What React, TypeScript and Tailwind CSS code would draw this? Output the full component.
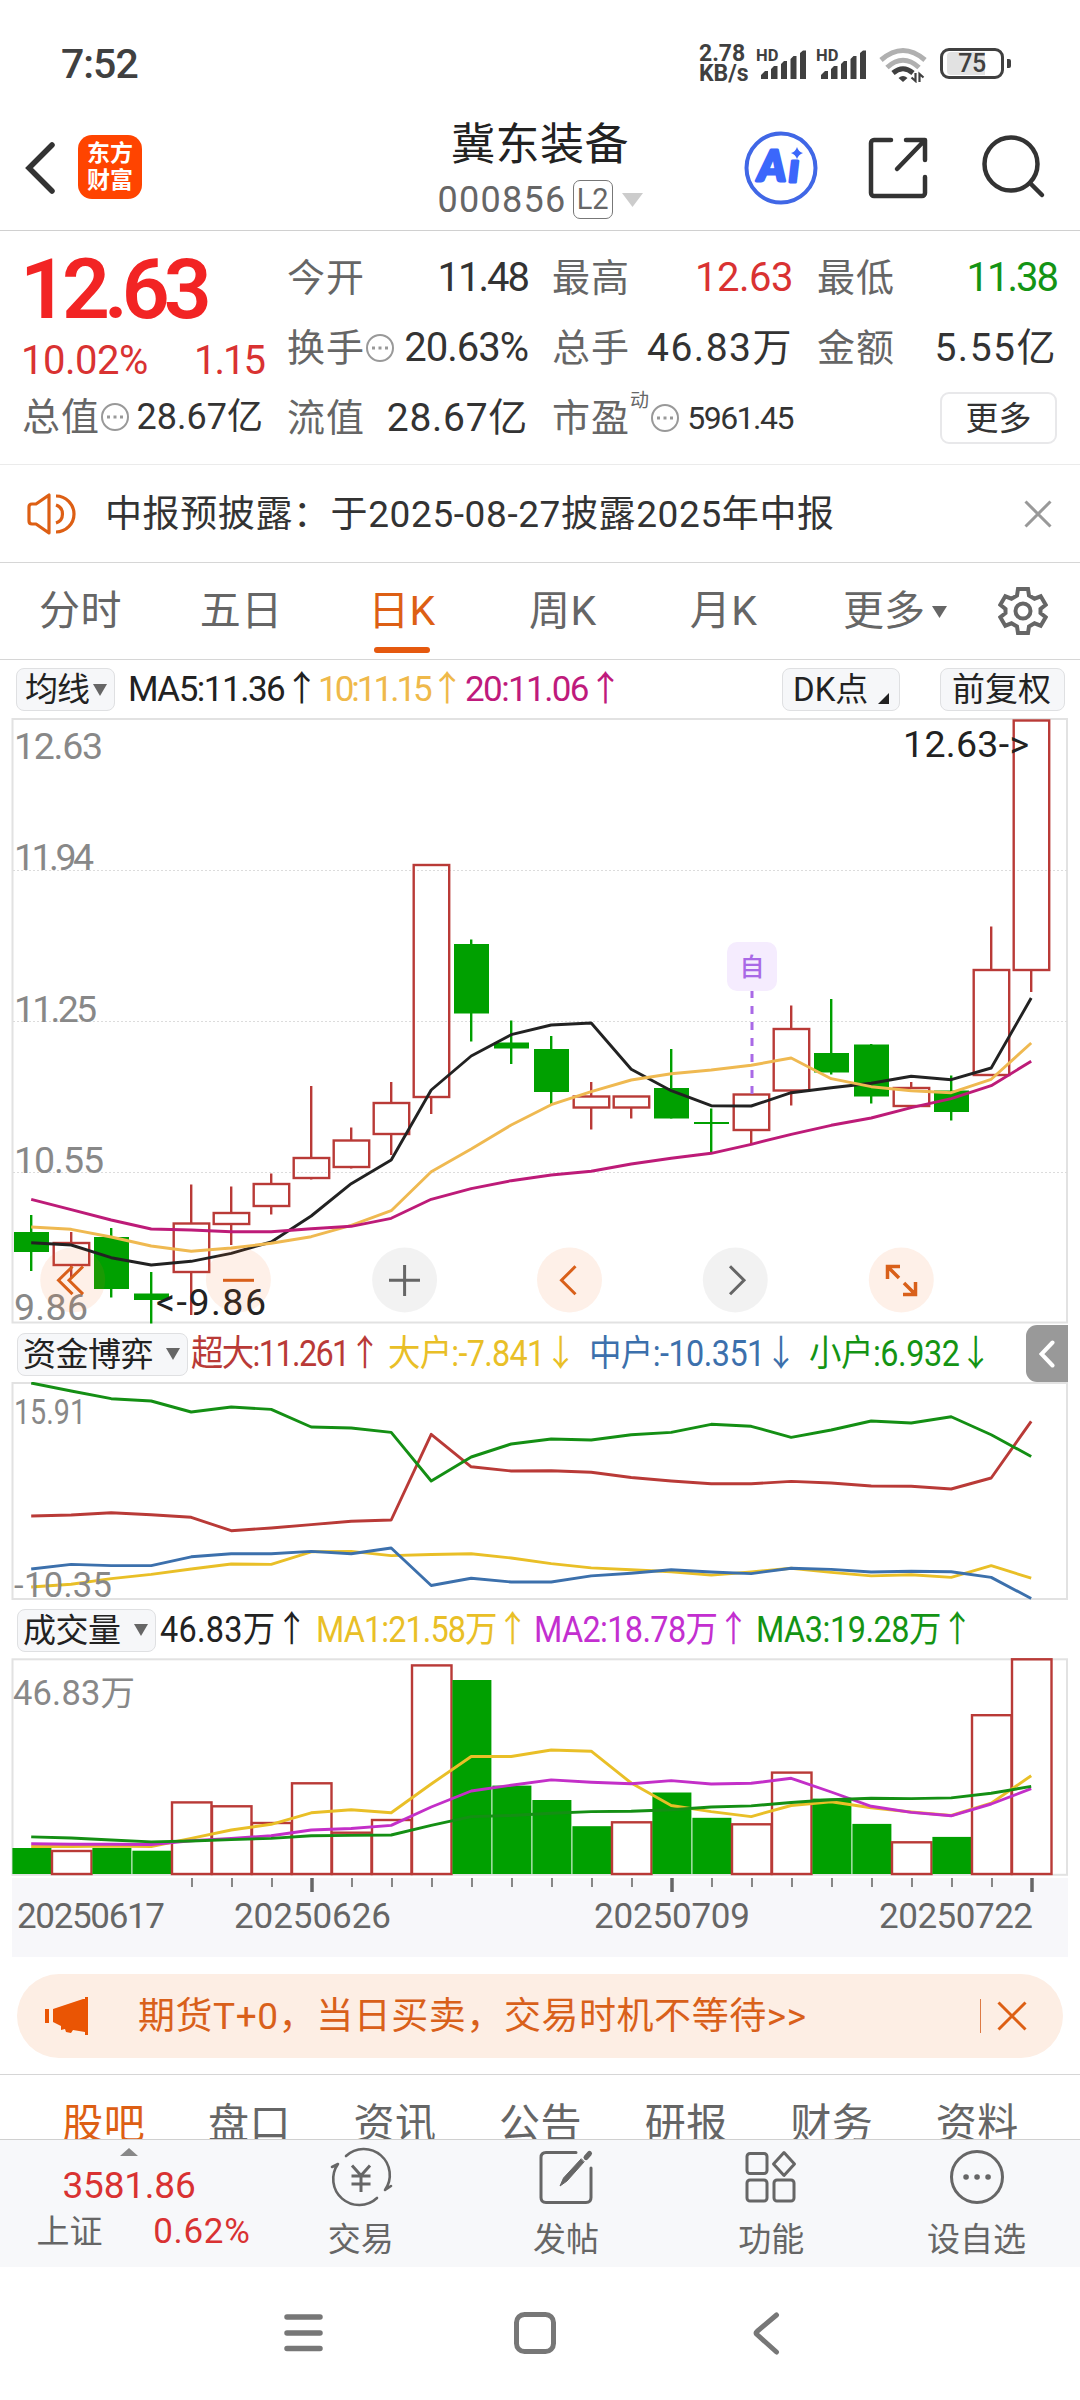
import type { ReactNode } from 'react'

const GREEN = '#00a000'
const RED = '#b93a37'
const GREEN_LINE = '#148f14'

// x of the nth trading day on every chart
const dayX = (i: number) => 31.2 + i * 40

interface Candle {
  up: boolean
  top: number
  bottom: number
  high: number
  low: number
}

const c = (up: boolean, top: number, bottom: number, high: number, low: number): Candle => ({ up, top, bottom, high, low })

const candles: Candle[] = [
  c(false, 1232, 1252, 1215, 1271),
  c(true, 1243, 1265, 1232, 1277),
  c(false, 1237, 1289, 1228, 1297.5),
  c(false, 1293.5, 1300, 1272, 1323.5),
  c(true, 1223.5, 1272, 1184.5, 1315),
  c(true, 1213, 1224, 1186.5, 1245),
  c(true, 1184, 1206, 1173.5, 1214.5),
  c(true, 1158, 1178, 1086, 1179.5),
  c(true, 1140.5, 1167, 1127.5, 1168.5),
  c(true, 1103, 1134, 1082, 1155),
  c(true, 865, 1097, 865, 1114),
  c(false, 944, 1013.5, 939.5, 1041.5),
  c(false, 1042.5, 1048.5, 1020.5, 1064),
  c(false, 1049, 1092, 1036, 1105),
  c(true, 1096.5, 1107.5, 1082, 1129.5),
  c(true, 1096.5, 1107.5, 1096.5, 1118.5),
  c(false, 1088, 1118.5, 1049, 1118.5),
  c(false, 1122, 1124, 1108.5, 1152.5),
  c(true, 1094.5, 1130, 1094.5, 1144.5),
  c(true, 1029, 1090.5, 1005.5, 1105.5),
  c(false, 1053, 1072.5, 999, 1074.5),
  c(false, 1044.5, 1096.5, 1044, 1103.5),
  c(true, 1088, 1106, 1082, 1106),
  c(false, 1090.5, 1112, 1075.5, 1120.5),
  c(true, 970, 1075, 926.5, 1075),
  c(true, 720.5, 970, 720.5, 992),
]

const ma5 = [1242.7, 1245, 1257.7, 1265, 1261.3, 1253.3, 1242, 1216, 1183.7, 1160, 1090, 1056, 1034.7, 1025, 1023, 1069.3, 1090.7, 1105.7, 1106, 1092.7, 1087.7, 1083.3, 1076.3, 1079.7, 1068, 998]
const ma10 = [1227, 1229.3, 1237, 1246, 1251.3, 1248, 1243.3, 1236.7, 1225.3, 1210.7, 1171.7, 1149, 1125, 1104.7, 1091.7, 1080, 1073.7, 1070, 1065.3, 1058, 1078.7, 1086.7, 1090.7, 1092.7, 1079.3, 1043]
const ma20 = [1199.3, 1209.7, 1220, 1229, 1230, 1231.7, 1231.7, 1228.7, 1226.3, 1218.3, 1199.3, 1188.7, 1180.7, 1175, 1171.3, 1164, 1158.3, 1153.3, 1144.3, 1134.3, 1125.3, 1118, 1107.7, 1098.7, 1085.7, 1061.3]

const fundSmall = [1, 9, 16.7, 19, 30, 25, 27.4, 45, 46, 50.4, 99, 75, 62, 57, 58, 52.7, 50.4, 42.3, 44.3, 55.4, 48, 39, 41, 34.7, 52.7, 74.5]
const fundHuge = [134, 133, 130.7, 132.7, 135.3, 148.7, 146, 142.6, 139.2, 138, 52.3, 84.8, 89, 88.7, 90.2, 95.5, 99, 101.7, 101.7, 99.4, 101, 104, 104.3, 107, 96, 39.3]
const fundBig = [205, 202.3, 196.6, 192.4, 187, 182, 182.4, 169.8, 169.4, 173.6, 172.5, 171.7, 176, 181.6, 185.9, 187.8, 189.7, 193.1, 190, 186.2, 190.4, 193.9, 192.7, 195.4, 183.6, 196.2]
const fundMid = [187, 182.4, 183.6, 183.6, 174.8, 171.7, 171.7, 169.4, 171.7, 166, 203.5, 196.2, 200, 200, 193.9, 191.2, 187.8, 190, 191.6, 186.2, 187.4, 190, 189.3, 189.7, 195.4, 216.5]

const volTop = [190, 193, 190, 192.7, 144.4, 148.3, 165, 125.3, 174.7, 162, 7.4, 22, 127.6, 142, 168.2, 164.3, 134.5, 159.8, 166.3, 114.6, 140.6, 165.9, 184.3, 178.9, 57.2, 1.3]
const volMa1 = [188.5, 188.5, 188, 188.5, 180.4, 172, 166.3, 154.8, 151.7, 154.8, 126, 98.5, 98.5, 92, 93.2, 125, 147.5, 153.6, 158.6, 147.5, 143.7, 149.8, 154, 157.5, 145.2, 117.7]
const volMa2 = [185.8, 186.2, 186.2, 186.5, 182.7, 180.4, 177.7, 172, 170.5, 167.4, 149, 133, 127.2, 121.9, 124.2, 125.7, 122.6, 126, 125.3, 120.3, 134, 148.3, 154.4, 157.8, 146, 130.7]
const volMa3 = [178.9, 180, 182, 183.9, 183, 181.6, 180.4, 177.7, 177.4, 177, 167.4, 158.6, 157.5, 155.2, 153.6, 153.3, 151.7, 149, 147.9, 144.5, 141.8, 140.2, 140.6, 139.9, 135.3, 128.4]

function Line({ data, color }: { data: number[]; color: string }) {
  return (
    <polyline
      points={data.map((y, i) => `${dayX(i)},${y}`).join(' ')}
      fill="none"
      stroke={color}
      strokeWidth="2.900"
      strokeLinejoin="round"
    />
  )
}

function Signal() {
  return (
    <div className="flex h-[34px] w-[50px] items-start">
      <span className="w-[5px] text-[16.5px] leading-none font-bold">HD</span>
      <svg className="mt-[2px] shrink-0" width="45" height="30" viewBox="0 0 45 30" fill="#404040">
        <path d="M0 29v-4l4-4h3v8zM10 29V19l3-3h3.500v13zM20 29V14l3-3h3v18zM29.500 29V9l3-3h3v23zM39 29V3l3-2.500h3V29z" />
      </svg>
    </div>
  )
}

function StatusBar() {
  return (
    <div className="flex h-[104px] shrink-0 items-start pt-[44px] pl-[61px] text-[#404040]">
      <div className="w-[638px] text-[41px] leading-[41px] font-medium tracking-[-1px]">7:52</div>
      <div className="w-[57px] text-[23px] leading-[19.500px] font-bold">
        <div>2.78</div>
        <div>KB/s</div>
      </div>
      <div className="flex w-[121px] gap-[10px] pt-[4px]">
        <Signal />
        <Signal />
      </div>
      <svg className="mt-[3px] ml-[2px]" width="48" height="36" viewBox="0 0 48 36" fill="none" strokeWidth="5">
        <path d="M2 13Q24-6 46 13" stroke="#b0b0b0" />
        <path d="M8 20.500Q24 6 40 20.500" stroke="#b0b0b0" />
        <path d="M14 26q10-8.500 20 0" stroke="#404040" />
        <path d="M19.500 31q4.500-4 9 0l-4.500 4z" fill="#404040" />
        <path d="M36.500 26v8l-4-3.500M40.500 35v-8l4 3.500" stroke="#404040" strokeWidth="2.200" />
      </svg>
      <div className="mt-[4px] ml-[13px] flex items-center gap-[3px]">
        <div className="relative flex h-[31px] w-[64px] items-center justify-center rounded-[9px] border-[3px] border-[#404040]">
          <div className="absolute inset-y-[1px] left-[4px] w-[38px] rounded-l-[4px] bg-[#e2e2e2]" />
          <span className="relative text-[25px] leading-none font-medium tracking-[-0.500px]">75</span>
        </div>
        <div className="h-[9px] w-[4px] rounded-r-[2px] bg-[#404040]" />
      </div>
    </div>
  )
}

function Header() {
  return (
    <div className="flex h-[127px] shrink-0 border-b border-[#d0d0d0]">
      <svg className="mt-[35px] ml-[22px]" width="40" height="58" viewBox="0 0 40 58" fill="none" stroke="#333" strokeWidth="5.500" strokeLinecap="round">
        <path d="M30 6L7 29l23 23" />
      </svg>
      <div className="mt-[31px] ml-[16px] flex h-[64px] w-[64px] flex-col items-center justify-center rounded-[14px] bg-[#ff4400] text-[23px] leading-[27px] font-bold text-white">
        <span>东方</span>
        <span>财富</span>
      </div>
      <div className="ml-[228px] flex w-[340px] flex-col items-center pt-[17px]">
        <div className="text-[44px] leading-[48px] tracking-[0.500px] text-[#222]">冀东装备</div>
        <div className="mt-[11px] flex items-center text-[#666]">
          <span className="text-[36px] leading-[38px] tracking-[1.300px]">000856</span>
          <span className="ml-[6px] flex h-[39px] w-[40px] items-center justify-center rounded-[7px] border border-[#777] text-[29px] leading-none">L2</span>
          <svg className="ml-[9px]" width="21" height="14" viewBox="0 0 21 14">
            <path d="M0 0h21L10.500 14z" fill="#ccc" />
          </svg>
        </div>
      </div>
      <svg className="mt-[26px] ml-[34px]" width="74" height="76" viewBox="0 0 74 76">
        <circle cx="37" cy="38" r="34.500" fill="none" stroke="#4067e6" strokeWidth="4" />
        <g fill="#3b67fb" stroke="#3b67fb" strokeWidth="3" strokeLinejoin="round" fontFamily="Lato" fontWeight="900" fontStyle="italic">
          <text x="14" y="51" fontSize="42" textLength="28" lengthAdjust="spacingAndGlyphs">A</text>
          <text x="45" y="52" fontSize="40">ı</text>
        </g>
        <path d="M53 17q1.500 5 6 6q-4.500 1.500-6 6q-1.500-4.500-6-6q4.500-1 6-6z" fill="#3b67fb" />
      </svg>
      <svg className="mt-[31px] ml-[48px]" width="66" height="66" viewBox="0 0 66 66" fill="none" stroke="#333" strokeWidth="4.500" strokeLinecap="round" strokeLinejoin="round">
        <path d="M25 5H8a3 3 0 0 0-3 3v50a3 3 0 0 0 3 3h48a3 3 0 0 0 3-3V42M40 5h19v20M58 6L31 34" />
      </svg>
      <svg className="mt-[31px] ml-[46px]" width="70" height="66" viewBox="0 0 70 66" fill="none" stroke="#333" strokeWidth="4.500" strokeLinecap="round">
        <circle cx="33" cy="29" r="26.500" />
        <path d="M52 48l12 12" />
      </svg>
    </div>
  )
}

function Info() {
  return (
    <svg width="30" height="30" viewBox="0 0 30 30" fill="none" stroke="#999" strokeWidth="2">
      <circle cx="15" cy="15" r="13" />
      <path d="M7 15h3M13.500 15h3M20 15h3" strokeWidth="3" />
    </svg>
  )
}

function Stat({ label, info, value, className }: { label: string; info?: ReactNode; value: string; className: string }) {
  return (
    <div className="flex h-[70px] items-center justify-between whitespace-nowrap">
      <div className="flex items-center">
        <span className="text-[38px] leading-none tracking-[1px] text-[#666]">{label}</span>
        {info}
      </div>
      <span className={`leading-none ${className}`}>{value}</span>
    </div>
  )
}

function Quote() {
  return (
    <div className="flex h-[234px] shrink-0 gap-[24px] border-b border-[#ebebeb] pt-[12px] pl-[22px]">
      <div className="w-[241px]">
        <div className="-ml-[2px] h-[89px] text-[84px] leading-[93px] font-semibold tracking-[-6px] text-[#f22424]">12.63</div>
        <div className="flex h-[50px] items-center justify-between pt-[8px] text-[40px] leading-none text-[#d93232]">
          <span className="-ml-px tracking-[-0.500px]">10.02%</span>
          <span className="-mr-px tracking-[-2px]">1.15</span>
        </div>
        <Stat label="总值" info={<Info />} value="28.67亿" className="text-[36px] text-[#333]" />
      </div>
      <div className="w-[241px]">
        <Stat label="今开" value="11.48" className="text-[40px] text-[#333] tracking-[-2px]" />
        <Stat label="换手" info={<Info />} value="20.63%" className="text-[40px] text-[#333] tracking-[-1px]" />
        <Stat label="流值" value="28.67亿" className="text-[39px] text-[#333] tracking-[0.700px]" />
      </div>
      <div className="w-[241px]">
        <Stat label="最高" value="12.63" className="text-[40px] text-[#d93232] tracking-[-0.500px]" />
        <Stat label="总手" value="46.83万" className="text-[39px] text-[#333] tracking-[1.500px]" />
        <Stat
          label="市盈"
          info={
            <>
              <span className="mt-[-36px] mr-px text-[19px] leading-none text-[#666]">动</span>
              <Info />
            </>
          }
          value="5961.45"
          className="text-[32px] text-[#333] tracking-[-1.500px]"
        />
      </div>
      <div className="w-[240px]">
        <Stat label="最低" value="11.38" className="text-[40px] text-[#149414] tracking-[-2px]" />
        <Stat label="金额" value="5.55亿" className="text-[39px] text-[#333] tracking-[1.500px]" />
        <div className="flex h-[70px] items-center justify-end">
          <button className="h-[52px] w-[117px] rounded-[9px] border-2 border-[#e8e8ea] text-[33px] leading-none text-[#333]">更多</button>
        </div>
      </div>
    </div>
  )
}

function Notice() {
  return (
    <div className="flex h-[98px] shrink-0 items-center border-b border-[#d6d6d6] pl-[27px]">
      <svg width="50" height="44" viewBox="0 0 50 44" fill="none" stroke="#dd5f14" strokeWidth="3.200" strokeLinejoin="round">
        <path d="M9 12l13-9v38l-13-9H5q-3 0-3-3V15q0-3 3-3zM29 4a18 18 0 0 1 0 36M29 13a9.500 9.500 0 0 1 0 18" />
      </svg>
      <span className="ml-[28px] w-[919px] pt-px text-[37px] leading-none tracking-[0.600px] text-[#333]">中报预披露：于2025-08-27披露2025年中报</span>
      <svg width="28" height="28" viewBox="0 0 28 28" stroke="#999" strokeWidth="3">
        <path d="M1.500 1.500l25 25M26.500 1.500l-25 25" />
      </svg>
    </div>
  )
}

function Gear() {
  return (
    <svg width="50" height="50" viewBox="0 0 50 50" fill="none" stroke="#666" strokeWidth="4">
      <path d="M20 3h10l1 6.500l5.500 3.200l6.200-2.400l5 8.400l-5.200 4.300v4l5.200 4.300l-5 8.400l-6.200-2.400l-5.500 3.200l-1 6.500H20l-1-6.500l-5.500-3.200l-6.200 2.400l-5-8.400L7.500 27v-4l-5.200-4.300l5-8.400l6.200 2.400L19 9.500z" />
      <circle cx="25" cy="25" r="7.500" />
    </svg>
  )
}

function PeriodTabs() {
  const tabs = ['分时', '五日', '日K', '周K', '月K']
  return (
    <div className="flex h-[97px] shrink-0 border-b border-[#d6d6d6] text-[41px] leading-none text-[#666]">
      {tabs.map(t => (
        <div key={t} className={`relative flex w-[160.800px] items-center justify-center pt-px tracking-[0.500px] ${t === '日K' ? 'text-[#dd5f14]' : ''}`}>
          {t}
          {t === '日K' && <div className="absolute bottom-[6px] left-[52px] h-[6px] w-[56px] rounded-full bg-[#e5590f]" />}
        </div>
      ))}
      <div className="ml-[39px] flex w-[155px] items-center pt-px">
        更多
        <svg className="ml-[7px]" width="15" height="12" viewBox="0 0 15 12">
          <path d="M0 0h15L7.500 12z" fill="#666" />
        </svg>
      </div>
      <div className="flex items-center">
        <Gear />
      </div>
    </div>
  )
}

function Chip({ className, children }: { className: string; children: ReactNode }) {
  return (
    <div className={`flex h-[43px] shrink-0 items-center rounded-[8px] border border-[#dfe0e2] bg-[#f6f7f9] text-[33px] leading-none whitespace-nowrap text-[#222] ${className}`}>
      {children}
    </div>
  )
}

function Caret({ className }: { className: string }) {
  return (
    <svg className={className} width="14" height="12" viewBox="0 0 14 12">
      <path d="M0 0h14L7 12z" fill="#666" />
    </svg>
  )
}

function MaLegend() {
  return (
    <div className="flex h-[58px] shrink-0 items-center pt-px pl-[16px] text-[35px] leading-none whitespace-nowrap">
      <Chip className="w-[99px] pl-[8px] tracking-[-1px]">
        均线
        <Caret className="ml-[4px]" />
      </Chip>
      <span className="ml-[13px] w-[190px] tracking-[-1.500px] text-[#222]">MA5:11.36↑</span>
      <span className="w-[147px] tracking-[-3px] text-[#efb94a]">10:11.15↑</span>
      <span className="w-[317px] tracking-[-1.600px] text-[#bf1a7c]">20:11.06↑</span>
      <Chip className="w-[118px] pl-[10px]">
        DK点
        <svg className="mt-[18px] ml-[10px]" width="11" height="11" viewBox="0 0 11 11">
          <path d="M11 0v11H0z" fill="#222" />
        </svg>
      </Chip>
      <Chip className="ml-[40px] w-[125px] pl-[11px]">前复权</Chip>
    </div>
  )
}

function CandleChart() {
  return (
    <svg className="block shrink-0" width="1080" height="606" viewBox="0 718 1080 606">
      <rect x="12.500" y="719" width="1054.500" height="603.500" fill="none" stroke="#e2e2e2" strokeWidth="2" />
      {[870.5, 1021.5, 1172.5].map(y => (
        <path key={y} d={`M13 ${y}H1067`} stroke="#dcdcdc" strokeDasharray="2 2" />
      ))}
      <g fontSize="37.500" fill="#888">
        <text x="14" y="759" textLength="89">12.63</text>
        <text x="14" y="870" textLength="80">11.94</text>
        <text x="14" y="1021.500" textLength="83">11.25</text>
        <text x="14" y="1173" textLength="90">10.55</text>
        <text x="14" y="1320" textLength="74">9.86</text>
      </g>
      {candles.map((k, i) => {
        const x = dayX(i)
        const color = k.up ? RED : GREEN
        return (
          <g key={i} stroke={color} strokeWidth="2.400">
            {k.up ? (
              <>
                <path d={`M${x} ${k.high}V${k.top}M${x} ${k.bottom}V${k.low}`} />
                <rect x={x - 17.5} y={k.top} width="35.500" height={k.bottom - k.top} fill="none" />
              </>
            ) : (
              <>
                <path d={`M${x} ${k.high}V${k.low}`} />
                <rect x={x - 17.2} y={k.top} width="35" height={k.bottom - k.top} fill={GREEN} stroke="none" />
              </>
            )}
          </g>
        )
      })}
      <Line data={ma5} color="#222" />
      <Line data={ma10} color="#efb951" />
      <Line data={ma20} color="#bd1b78" />
      <path d="M752 1094V991" stroke="#a969e6" strokeWidth="3" strokeDasharray="8 8" />
      <rect x="727" y="942" width="50" height="49" rx="10" fill="#f5ecfe" />
      <text x="752" y="976" fontSize="25" textAnchor="middle" fill="#a969e6" fontWeight="500">自</text>
      <g fontSize="37.500" fill="#222">
        <text x="903" y="757" textLength="126">12.63-&gt;</text>
        <text x="156" y="1315" textLength="110">&lt;-9.86</text>
      </g>
      {/* floating zoom / pan buttons */}
      {[72.7, 238.4, 404.6, 569.5, 735.3, 901.3].map((x, i) => (
        <circle key={x} cx={x} cy="1280" r="32.500" fill={i === 2 || i === 4 ? '#000' : '#f26a1b'} opacity={i === 2 || i === 4 ? 0.05 : 0.1} />
      ))}
      <g fill="none" stroke="#d9601a" strokeWidth="3">
        <path d="M72.500 1266.500l-14 13.800l14 13.800M83 1266.500l-14 13.800l14 13.800" />
        <path d="M223 1280.300h31" />
        <path d="M575.500 1266.300l-14 14l14 14" />
        <path d="M900 1266.500h-12.500V1279M888 1267l11 11M903 1294.500h12.500V1282M915 1294l-11-11" strokeWidth="3.500" />
      </g>
      <path d="M389 1280.300h31M404.600 1265v31M730 1266.300l14 14l-14 14" fill="none" stroke="#666" strokeWidth="3" />
    </svg>
  )
}

function FundLegend() {
  return (
    <div className="relative flex h-[58px] shrink-0 items-center pl-[17px] text-[36px] leading-none whitespace-nowrap">
      <Chip className="mt-[2px] w-[171px] pl-[5px] tracking-[-0.500px]">
        资金博弈
        <Caret className="ml-[13px]" />
      </Chip>
      <span className="ml-[3px] w-[197px] origin-left scale-x-90 pt-[2px] tracking-[-1.800px] text-[#b93a37]">超大:11.261↑</span>
      <span className="w-[201px] origin-left scale-x-90 pt-[2px] tracking-[-0.800px] text-[#e9bf27]">大户:-7.841↓</span>
      <span className="w-[220px] origin-left scale-x-90 pt-[2px] tracking-[-0.600px] text-[#3c70ac]">中户:-10.351↓</span>
      <span className="origin-left scale-x-90 pt-[2px] tracking-[-0.500px] text-[#149414]">小户:6.932↓</span>
      <div className="absolute top-px right-[12px] flex h-[57px] w-[42px] items-center justify-center rounded-l-[11px] bg-[#999]">
        <svg width="16" height="28" viewBox="0 0 16 28" fill="none" stroke="#fff" strokeWidth="4" strokeLinecap="round">
          <path d="M13.500 2.500L2.500 14l11 11.500" />
        </svg>
      </div>
    </div>
  )
}

function FundChart() {
  return (
    <svg className="block shrink-0" width="1080" height="218" viewBox="0 0 1080 218">
      <rect x="12.500" y="1" width="1054.500" height="216" fill="none" stroke="#e2e2e2" strokeWidth="2" />
      <Line data={fundHuge} color={RED} />
      <Line data={fundBig} color="#e9bf27" />
      <Line data={fundMid} color="#3c70ac" />
      <Line data={fundSmall} color={GREEN_LINE} />
      <g fontSize="34.500" fill="#888">
        <text x="14" y="42" textLength="72" lengthAdjust="spacingAndGlyphs">15.91</text>
        <text x="14" y="214.500" textLength="98">-10.35</text>
      </g>
    </svg>
  )
}

function VolumeLegend() {
  return (
    <div className="flex h-[58px] shrink-0 items-center pl-[17px] text-[36px] leading-none whitespace-nowrap">
      <Chip className="mt-[2px] w-[139px] pl-[5px] tracking-[-0.500px]">
        成交量
        <Caret className="ml-[13px]" />
      </Chip>
      <span className="ml-[4px] w-[156px] origin-left scale-x-90 pt-[2px] tracking-[0.300px] text-[#222]">46.83万↑</span>
      <span className="w-[218px] origin-left scale-x-90 pt-[2px] tracking-[-1px] text-[#e9bf27]">MA1:21.58万↑</span>
      <span className="w-[222px] origin-left scale-x-90 pt-[2px] tracking-[-0.700px] text-[#c32fd0]">MA2:18.78万↑</span>
      <span className="origin-left scale-x-90 pt-[2px] tracking-[-0.500px] text-[#149414]">MA3:19.28万↑</span>
    </div>
  )
}

const upDays = new Set([1, 4, 5, 6, 7, 8, 9, 10, 15, 18, 19, 22, 24, 25])

function VolumeChart() {
  return (
    <svg className="block shrink-0" width="1080" height="299" viewBox="0 0 1080 299">
      <rect x="12.500" y="1.300" width="1054.500" height="215.500" fill="none" stroke="#e2e2e2" strokeWidth="2" />
      {volTop.map((y, i) =>
        upDays.has(i) ? (
          <rect key={i} x={dayX(i) - 19.2} y={y} width="39.500" height={216 - y} fill="none" stroke={RED} strokeWidth="2.400" />
        ) : (
          <rect key={i} x={dayX(i) - 18.8} y={y} width="39" height={216 - y} fill={GREEN} />
        )
      )}
      <Line data={volMa1} color="#e9bf27" />
      <Line data={volMa2} color="#c32fc8" />
      <Line data={volMa3} color={GREEN_LINE} />
      <text x="13" y="47" fontSize="34.500" fill="#888" textLength="122">46.83万</text>
      <rect x="12" y="220" width="1056" height="79" fill="#f7f7fa" />
      {volTop.map((_, i) => {
        if (i < 4) return null
        const major = i === 7 || i === 16 || i === 25
        return <path key={i} d={`M${dayX(i) + 0.8} 220v${major ? 14 : 9}`} stroke={major ? '#666' : '#888'} strokeWidth={major ? 3.5 : 2} />
      })}
      <g fontSize="35" fill="#666">
        <text x="17" y="270" textLength="148">20250617</text>
        <text x="234" y="270" textLength="157">20250626</text>
        <text x="594" y="270" textLength="156">20250709</text>
        <text x="879" y="270" textLength="154">20250722</text>
      </g>
    </svg>
  )
}

function Banner() {
  return (
    <div className="mx-[17px] mt-[17px] flex h-[84px] shrink-0 items-center rounded-full bg-[#fdeee4] pl-[28px]">
      <svg width="43" height="38" viewBox="0 0 43 38" fill="#ea5504">
        <path d="M0 12h4v14H0zM8 12L38 2h2V0h3v38h-3v-3l-12-2l-2 3l-5-1l-1-3l-4 1v-4l-8-4z" />
      </svg>
      <span className="ml-[50px] w-[842px] text-[37px] leading-none tracking-[0.550px] text-[#d9601a]">期货T+0，当日买卖，交易时机不等待&gt;&gt;</span>
      <div className="mr-[16px] h-[34px] w-px bg-[#dd7a45]" />
      <svg width="30" height="30" viewBox="0 0 30 30" stroke="#dd5f14" strokeWidth="3">
        <path d="M1.500 1.500l27 27M28.500 1.500l-27 27" />
      </svg>
    </div>
  )
}

function SectionTabs() {
  const tabs = ['股吧', '盘口', '资讯', '公告', '研报', '财务', '资料']
  return (
    <div className="mt-[16px] flex h-[65px] shrink-0 overflow-hidden border-t border-[#d6d6d6] pt-[26px] pl-[31px]">
      {tabs.map((t, i) => (
        <div key={t} className={`w-[145.600px] text-center text-[41px] leading-[46px] tracking-[0.500px] ${i === 0 ? 'text-[#dd5f14]' : 'text-[#666]'}`}>
          {t}
        </div>
      ))}
    </div>
  )
}

function Action({ label, children }: { label: string; children: ReactNode }) {
  return (
    <div className="flex w-[205.300px] flex-col items-center">
      <svg className="mt-[6px]" width="64" height="62" viewBox="0 0 64 62" fill="none" stroke="#666" strokeWidth="3" strokeLinecap="round" strokeLinejoin="round">
        {children}
      </svg>
      <span className="mt-[15px] text-[33px] leading-[34px] text-[#666]">{label}</span>
    </div>
  )
}

function BottomBar() {
  return (
    <div className="flex h-[128px] shrink-0 border-t border-[#d0d0d0] bg-[#f7f8fa]">
      <div className="flex w-[258px] flex-col items-center pt-[8px]">
        <svg width="18" height="8" viewBox="0 0 18 8">
          <path d="M9 0l9 8H0z" fill="#888" />
        </svg>
        <div className="mt-[11px] text-[37px] leading-[37px] tracking-[-0.200px] text-[#d93232]">3581.86</div>
        <div className="mt-[9px] ml-[29px] flex w-[214px] items-center justify-between text-[35px] leading-[38px]">
          <span className="text-[33px] text-[#666]">上证</span>
          <span className="tracking-[0.700px] text-[#d93232]">0.62%</span>
        </div>
      </div>
      <Action label="交易">
        <path d="M17 10A26 26 0 0 1 56 44l6-4M48 52A26 26 0 0 1 9 18l-6 3" strokeWidth="2.600" />
        <path d="M23 19.500l9 10l9-10M32 30v16M22.500 30h19M22.500 38h19" strokeLinecap="butt" />
      </Action>
      <Action label="发帖">
        <path d="M42 6.500H12q-5 0-5 5v40q0 5 5 5h40q5 0 5-5V22" />
        <path d="M50 16L33 35l-7 5l3.500-8L47 13z" fill="#666" strokeWidth="1" />
        <path d="M52 11.500l3.500-4" strokeWidth="5" />
      </Action>
      <Action label="功能">
        <rect x="8" y="7.500" width="20" height="20" rx="3" />
        <rect x="8" y="34" width="20" height="21" rx="3" />
        <rect x="35" y="34" width="20" height="21" rx="3" />
        <path d="M45 6.500L55.500 18L45 29.500L34.500 18z" />
      </Action>
      <Action label="设自选">
        <circle cx="32" cy="31" r="25.500" />
        <path d="M21 31h.1M32 31h.1M43 31h.1" strokeWidth="5.500" />
      </Action>
    </div>
  )
}

function SystemNav() {
  return (
    <div className="flex grow items-start pt-[43px] pl-[283px]">
      <svg width="41" height="46" viewBox="0 0 41 46" stroke="#777" strokeWidth="5.500" strokeLinecap="round">
        <path d="M4 7h33M4 23h33M4 38.500h33" />
      </svg>
      <svg className="ml-[189px]" width="44" height="46" viewBox="0 0 44 46" fill="none" stroke="#777" strokeWidth="5">
        <rect x="3.500" y="4.500" width="37" height="37" rx="8" />
      </svg>
      <svg className="ml-[194px]" width="32" height="46" viewBox="0 0 32 46" fill="none" stroke="#777" strokeWidth="5" strokeLinecap="round" strokeLinejoin="round">
        <path d="M25.500 5L6 21.500q-2 1.500 0 3L25.500 42" />
      </svg>
    </div>
  )
}

export default function App() {
  return (
    <div className="flex h-[2400px] w-[1080px] flex-col overflow-hidden bg-white font-['Roboto','Noto_Sans_CJK_SC',sans-serif]">
      <StatusBar />
      <Header />
      <Quote />
      <Notice />
      <PeriodTabs />
      <MaLegend />
      <CandleChart />
      <FundLegend />
      <FundChart />
      <VolumeLegend />
      <VolumeChart />
      <Banner />
      <SectionTabs />
      <BottomBar />
      <SystemNav />
    </div>
  )
}
